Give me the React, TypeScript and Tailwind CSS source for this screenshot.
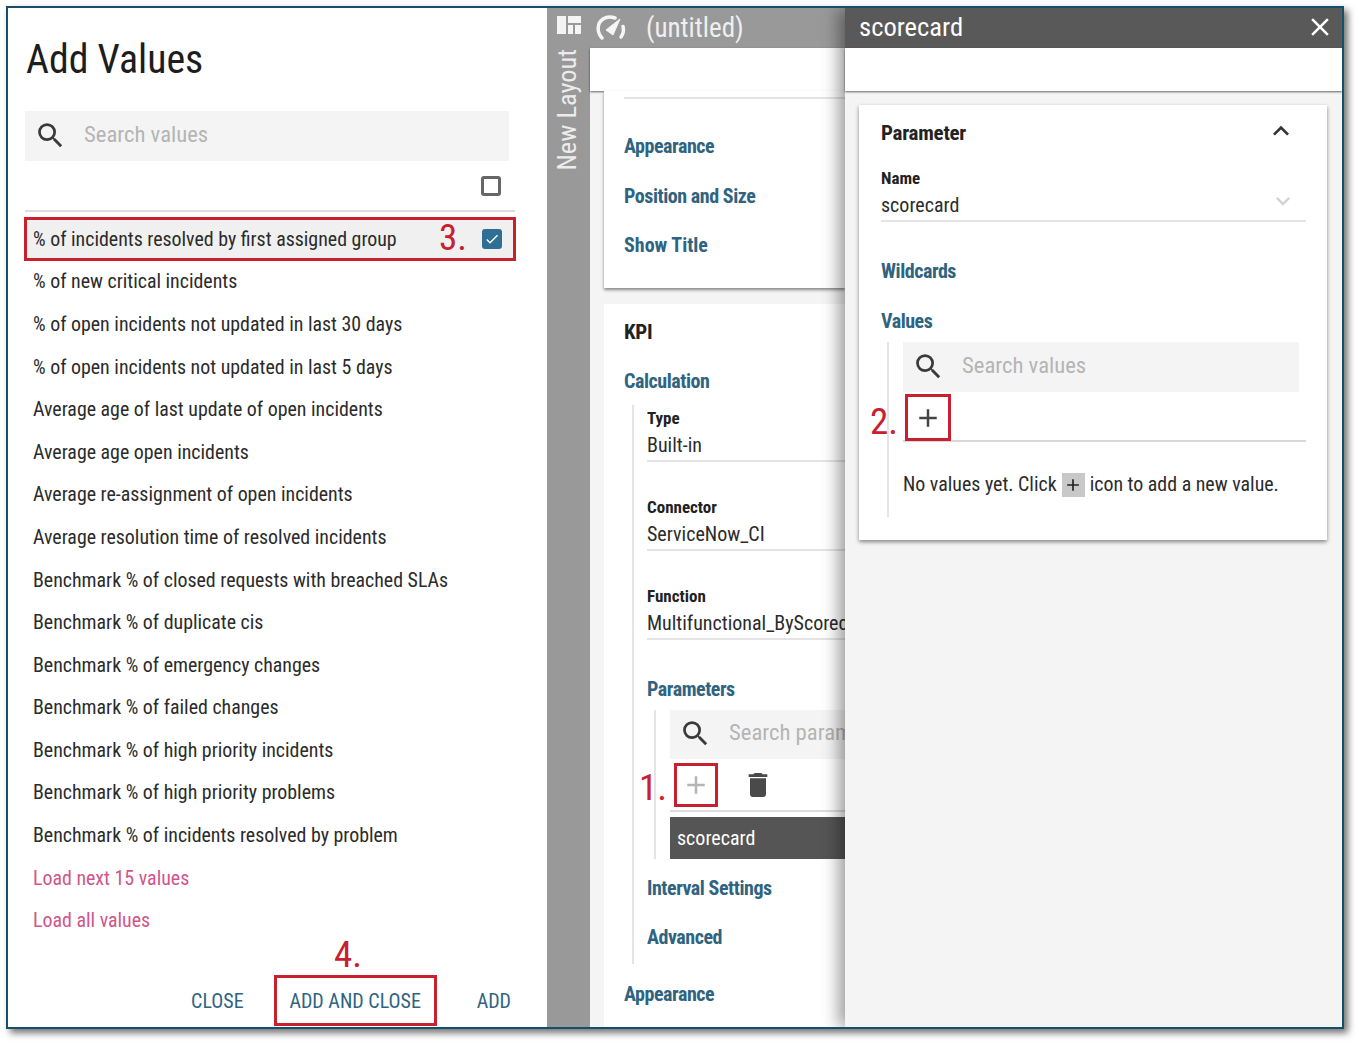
import { MdAdd, MdCheck, MdClose, MdDelete, MdExpandMore, MdKeyboardArrowUp, MdSearch } from "react-icons/md";

const values = [
  "% of new critical incidents",
  "% of open incidents not updated in last 30 days",
  "% of open incidents not updated in last 5 days",
  "Average age of last update of open incidents",
  "Average age open incidents",
  "Average re-assignment of open incidents",
  "Average resolution time of resolved incidents",
  "Benchmark % of closed requests with breached SLAs",
  "Benchmark % of duplicate cis",
  "Benchmark % of emergency changes",
  "Benchmark % of failed changes",
  "Benchmark % of high priority incidents",
  "Benchmark % of high priority problems",
  "Benchmark % of incidents resolved by problem",
];

function SearchBox({ label, className }: { label: string; className: string }) {
  return (
    <div className={`flex shrink-0 items-center overflow-hidden bg-[#f4f4f4] ${className}`}>
      <MdSearch className="mb-[2px] ml-[9px] shrink-0 text-[33px] text-[#3a3a3a]" />
      <span className="mb-[2px] ml-[17px] whitespace-nowrap text-[22.7px] text-[#b4b4b4]">{label}</span>
    </div>
  );
}

function SectionLink({ label, className = "", tracking = "tracking-[-0.45px]" }: { label: string; className?: string; tracking?: string }) {
  return <div className={`whitespace-nowrap text-[20px] font-bold text-[#2f6480] ${tracking} ${className}`}>{label}</div>;
}

function Field({ label, value, className = "" }: { label: string; value: string; className?: string }) {
  return (
    <div className={`border-b-2 border-[#e4e4e4] ${className}`}>
      <div className="h-[27px] text-[17px] leading-[27px] font-bold text-[#222]">{label}</div>
      <div className="h-[28px] overflow-hidden text-[20px] leading-[27px] whitespace-nowrap text-[#2b2b2b]">{value}</div>
    </div>
  );
}

function Marker({ label, className }: { label: string; className: string }) {
  return <span className={`absolute text-[37px] leading-none text-[#c8202f] ${className}`}>{label}</span>;
}

export default function App() {
  return (
    <div className="h-[1047px] w-[1362px] overflow-hidden bg-white pt-[6px] pl-[6px] font-['Roboto',sans-serif] [font-stretch:75%]">
      <div className="flex h-[1023px] w-[1338px] overflow-hidden border-2 border-[#14506a] shadow-[4px_4px_7px_rgba(0,0,0,0.55)]">
        {/* add values dialog */}
        <div className="flex w-[539px] shrink-0 flex-col bg-white pl-[17px]">
          <h1 className="mt-[22px] ml-[1px] h-[60px] text-[39.8px] leading-[60px] font-normal text-[#1d1d1d]">Add Values</h1>
          <SearchBox label="Search values" className="mt-[21px] h-[50px] w-[484px]" />
          <div className="flex h-[49px] w-[476px] shrink-0 items-center justify-end">
            <span className="h-[20px] w-[20px] rounded-[3px] border-[3px] border-[#666]" />
          </div>
          <div className="h-[2px] w-[490px] shrink-0 bg-[#dcdcdc]" />
          <div className="mt-[5px] -ml-[1px] flex h-[44px] w-[492px] shrink-0 items-center border-[3px] border-[#c8202f] bg-[#f0f0f0] pl-[6px] text-[19.9px] text-[#2b2b2b]">
            <span className="mt-[1px] whitespace-nowrap">% of incidents resolved by first assigned group</span>
            <span className="mb-[3px] ml-auto text-[37px] leading-none text-[#c8202f]">3.</span>
            <span className="mr-[11px] ml-[15px] flex h-[20px] w-[20px] items-center justify-center rounded-[3px] bg-[#2f6f94]">
              <MdCheck className="text-[16px] text-white" />
            </span>
          </div>
          <div>
            {values.map((value) => (
              <div key={value} className="flex h-[42.6px] items-center pl-[8px] text-[19.9px] whitespace-nowrap text-[#2b2b2b]">
                {value}
              </div>
            ))}
            <div className="flex h-[42.6px] items-center pl-[8px] text-[19.9px] text-[#d0558c]">Load next 15 values</div>
            <div className="flex h-[42.6px] items-center pl-[8px] text-[19.9px] text-[#d0558c]">Load all values</div>
          </div>
          <div className="relative mt-auto mb-[1px] flex h-[51px] items-center justify-end pr-[36px] text-[20px] text-[#2f6480]">
            <span>CLOSE</span>
            <span className="mr-[40px] ml-[30px] flex h-[51px] w-[163px] items-center justify-center border-[3px] border-[#c8202f]">ADD AND CLOSE</span>
            <span>ADD</span>
            <Marker label="4." className="top-[-39px] left-[309px]" />
          </div>
        </div>

        {/* layout rail */}
        <div className="flex w-[43px] shrink-0 flex-col items-center bg-[#999] pt-[8px]">
          <svg width="24" height="18" viewBox="0 0 24 18" fill="#f4f4f4">
            <rect x="0" y="0" width="9" height="18" />
            <rect x="11" y="0" width="13" height="7" />
            <rect x="11" y="9" width="5" height="9" />
            <rect x="18" y="9" width="6" height="9" />
          </svg>
          <span className="mt-[15px] mr-[3px] rotate-180 text-[26.4px] leading-none text-[#ececec] [writing-mode:vertical-rl]">New Layout</span>
        </div>

        {/* widget editor */}
        <div className="flex w-[255px] shrink-0 flex-col bg-[#f4f4f4]">
          <div className="flex h-[40px] shrink-0 items-center bg-[#999] text-[#efefef]">
            <svg width="32" height="28" viewBox="0 0 32 28" fill="none" stroke="#f6f6f6" className="ml-[5px]">
              <path d="M7 24C1.500 18 2 9 8 5c3.500-2.300 8-2.500 12-1" strokeWidth="3.500" strokeLinecap="round" />
              <path d="M26 23c2.500-3.500 3-7 2-10.500" strokeWidth="3.500" strokeLinecap="round" />
              <path d="M25 5 L18 21 L11 16 Z" fill="#f6f6f6" strokeWidth="1" />
            </svg>
            <span className="ml-[19px] text-[27px] leading-none">(untitled)</span>
          </div>
          <div className="h-[43px] shrink-0 bg-white shadow-[0_1px_2px_rgba(0,0,0,0.6)]" />
          <div className="ml-[14px] h-[197px] shrink-0 bg-white pl-[20px] shadow-[0_2px_3px_rgba(0,0,0,0.45)]">
            <div className="mt-[6px] h-[2px] bg-[#e4e4e4]" />
            <SectionLink label="Appearance" className="mt-[35px] h-[24px] leading-[24px]" />
            <SectionLink label="Position and Size" className="mt-[26px] h-[24px] leading-[24px]" />
            <SectionLink label="Show Title" tracking="tracking-normal" className="mt-[25px] h-[24px] leading-[24px]" />
          </div>
          <div className="mt-[16px] ml-[14px] flex-1 bg-white pl-[20px]">
            <div className="mt-[15px] h-[26px] text-[21px] leading-[26px] font-bold tracking-[-0.3px] text-[#222]">KPI</div>
            <SectionLink label="Calculation" className="mt-[24px] h-[24px] leading-[24px]" />
            <div className="mt-[12px] ml-[8px] h-[559px] border-l-2 border-[#e4e4e4] pl-[13px]">
              <Field label="Type" value="Built-in" />
              <Field label="Connector" value="ServiceNow_CI" className="mt-[32px]" />
              <Field label="Function" value="Multifunctional_ByScorecard" className="mt-[32px]" />
              <SectionLink label="Parameters" className="mt-[37px] h-[24px] leading-[24px]" />
              <div className="mt-[9px] ml-[7px] flex h-[149px] border-l-2 border-[#e4e4e4] pl-[14px]">
                <div className="w-full">
                  <SearchBox label="Search parameters" className="h-[49px] w-[300px]" />
                  <div className="relative flex h-[53px] w-[300px] items-center border-b-2 border-[#dcdcdc]">
                    <span className="ml-[4px] flex h-[44px] w-[44px] items-center justify-center border-[3px] border-[#c8202f]">
                      <MdAdd className="text-[30px] text-[#b4b4b4]" />
                    </span>
                    <MdDelete className="ml-[24px] text-[32px] text-[#4a4a4a]" />
                    <Marker label="1." className="top-[10px] left-[-31px]" />
                  </div>
                  <div className="mt-[5px] flex h-[42px] w-[300px] items-center bg-[#555] pl-[7px] text-[20px] text-white">scorecard</div>
                </div>
              </div>
              <SectionLink label="Interval Settings" className="mt-[17px] h-[24px] leading-[24px]" />
              <SectionLink label="Advanced" className="mt-[25px] h-[24px] leading-[24px]" />
            </div>
            <SectionLink label="Appearance" className="mt-[18px] h-[24px] leading-[24px]" />
          </div>
        </div>

        {/* parameter editor */}
        <div className="relative z-10 flex flex-1 flex-col bg-[#f4f4f4] shadow-[-6px_0_16px_rgba(0,0,0,0.4)]">
          <div className="flex h-[40px] shrink-0 items-center justify-between bg-[#595959] pr-[7px] pl-[14px] text-white">
            <span className="mb-[2px] text-[26.6px] leading-none">scorecard</span>
            <MdClose className="mb-[3px] text-[30px]" />
          </div>
          <div className="h-[43px] shrink-0 bg-white shadow-[0_1px_2px_rgba(0,0,0,0.6)]" />
          <div className="mt-[14px] ml-[14px] h-[435px] w-[468px] bg-white pl-[22px] shadow-[0_2px_4px_rgba(0,0,0,0.45)]">
            <div className="relative mt-[15px] flex h-[26px] w-[425px] items-center justify-between">
              <span className="text-[21px] leading-[26px] font-bold tracking-[-0.25px] text-[#222]">Parameter</span>
              <MdKeyboardArrowUp className="mr-[9px] mb-[4px] text-[32px] text-[#333]" />
            </div>
            <div className="relative mt-[19px] w-[425px]">
              <Field label="Name" value="scorecard" />
              <MdExpandMore className="absolute top-[22px] right-[9px] text-[28px] text-[#d4d4d4]" />
            </div>
            <SectionLink label="Wildcards" className="mt-[37px] h-[24px] leading-[24px]" />
            <SectionLink label="Values" className="mt-[26px] h-[24px] leading-[24px]" />
            <div className="mt-[9px] ml-[6px] h-[175px] w-[419px] border-l-2 border-[#e4e4e4] pl-[14px]">
              <SearchBox label="Search values" className="h-[50px] w-[396px]" />
              <div className="relative flex h-[50px] items-end border-b-2 border-[#d8d8d8]">
                <span className="mb-[-1px] ml-[2px] flex h-[47px] w-[46px] items-center justify-center border-[3px] border-[#c8202f]">
                  <MdAdd className="text-[30px] text-[#444]" />
                </span>
                <Marker label="2." className="top-[11px] left-[-33px]" />
              </div>
              <div className="mt-[30px] flex h-[26px] items-center text-[19.9px] whitespace-nowrap text-[#2b2b2b]">
                <span>No values yet. Click</span>
                <span className="mx-[5px] flex h-[24px] w-[23px] items-center justify-center bg-[#c8c8c8]">
                  <MdAdd className="text-[20px] text-[#222]" />
                </span>
                <span>icon to add a new value.</span>
              </div>
            </div>
          </div>
        </div>
      </div>
    </div>
  );
}
